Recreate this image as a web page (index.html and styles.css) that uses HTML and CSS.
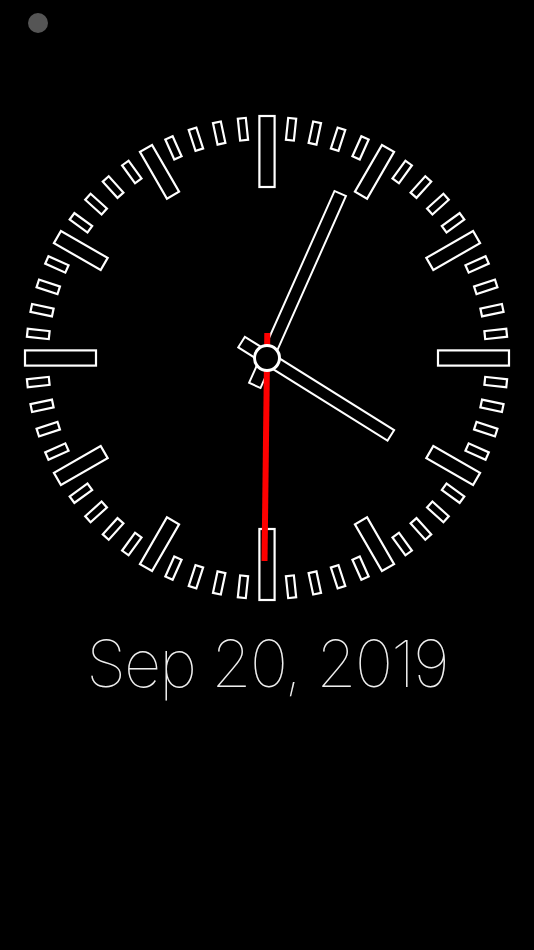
FILE: index.html
```html
<!DOCTYPE html>
<html lang="en">
<head>
<meta charset="utf-8">
<title>Clock</title>
<link rel="stylesheet" href="styles.css">
</head>
<body>
<div class="screen">
  <div class="status"><span class="dot"></span></div>
  <svg class="clock" viewBox="-267 -250 534 500" width="534" height="500" aria-label="Analog clock">
    <defs>
      <rect id="mn" class="tick" x="-4" y="-241" width="8" height="22"/>
      <rect id="hr" class="tick" x="-7" y="-242" width="14" height="54"/>
      <rect id="qt" class="tick" x="-7.6" y="-242" width="15.2" height="71"/>
    </defs>
    <g class="ticks">
      <use href="#qt" transform="rotate(0)"/>
      <use href="#mn" transform="rotate(6)"/>
      <use href="#mn" transform="rotate(12)"/>
      <use href="#mn" transform="rotate(18)"/>
      <use href="#mn" transform="rotate(24)"/>
      <use href="#hr" transform="rotate(30)"/>
      <use href="#mn" transform="rotate(36)"/>
      <use href="#mn" transform="rotate(42)"/>
      <use href="#mn" transform="rotate(48)"/>
      <use href="#mn" transform="rotate(54)"/>
      <use href="#hr" transform="rotate(60)"/>
      <use href="#mn" transform="rotate(66)"/>
      <use href="#mn" transform="rotate(72)"/>
      <use href="#mn" transform="rotate(78)"/>
      <use href="#mn" transform="rotate(84)"/>
      <use href="#qt" transform="rotate(90)"/>
      <use href="#mn" transform="rotate(96)"/>
      <use href="#mn" transform="rotate(102)"/>
      <use href="#mn" transform="rotate(108)"/>
      <use href="#mn" transform="rotate(114)"/>
      <use href="#hr" transform="rotate(120)"/>
      <use href="#mn" transform="rotate(126)"/>
      <use href="#mn" transform="rotate(132)"/>
      <use href="#mn" transform="rotate(138)"/>
      <use href="#mn" transform="rotate(144)"/>
      <use href="#hr" transform="rotate(150)"/>
      <use href="#mn" transform="rotate(156)"/>
      <use href="#mn" transform="rotate(162)"/>
      <use href="#mn" transform="rotate(168)"/>
      <use href="#mn" transform="rotate(174)"/>
      <use href="#qt" transform="rotate(180)"/>
      <use href="#mn" transform="rotate(186)"/>
      <use href="#mn" transform="rotate(192)"/>
      <use href="#mn" transform="rotate(198)"/>
      <use href="#mn" transform="rotate(204)"/>
      <use href="#hr" transform="rotate(210)"/>
      <use href="#mn" transform="rotate(216)"/>
      <use href="#mn" transform="rotate(222)"/>
      <use href="#mn" transform="rotate(228)"/>
      <use href="#mn" transform="rotate(234)"/>
      <use href="#hr" transform="rotate(240)"/>
      <use href="#mn" transform="rotate(246)"/>
      <use href="#mn" transform="rotate(252)"/>
      <use href="#mn" transform="rotate(258)"/>
      <use href="#mn" transform="rotate(264)"/>
      <use href="#qt" transform="rotate(270)"/>
      <use href="#mn" transform="rotate(276)"/>
      <use href="#mn" transform="rotate(282)"/>
      <use href="#mn" transform="rotate(288)"/>
      <use href="#mn" transform="rotate(294)"/>
      <use href="#hr" transform="rotate(300)"/>
      <use href="#mn" transform="rotate(306)"/>
      <use href="#mn" transform="rotate(312)"/>
      <use href="#mn" transform="rotate(318)"/>
      <use href="#mn" transform="rotate(324)"/>
      <use href="#hr" transform="rotate(330)"/>
      <use href="#mn" transform="rotate(336)"/>
      <use href="#mn" transform="rotate(342)"/>
      <use href="#mn" transform="rotate(348)"/>
      <use href="#mn" transform="rotate(354)"/>
    </g>
    <rect class="hand" x="-6.25" y="-146" width="12.5" height="176" transform="rotate(122)"/>
    <rect class="hand" x="-6.25" y="-180" width="12.5" height="210" transform="rotate(24)"/>
    <rect class="second" x="-3" y="-203" width="6" height="228" transform="rotate(180.7)"/>
    <circle class="pivot" cx="0" cy="0" r="12.5"/>
  </svg>
  <div class="date">Sep 20, 2019</div>
</div>
</body>
</html>
```

FILE: styles.css
```css
html, body {
  margin: 0;
  padding: 0;
  background: #000;
}

.screen {
  width: 534px;
  height: 950px;
  display: flex;
  flex-direction: column;
  align-items: stretch;
  background: #000;
  overflow: hidden;
}

.status {
  padding: 13px 0 0 28px;
  height: 20px;
}

.dot {
  display: block;
  width: 20px;
  height: 20px;
  border-radius: 50%;
  background: #555;
}

.clock {
  display: block;
  margin-top: 75px;
  width: 534px;
  height: 500px;
}

.tick {
  fill: none;
  stroke: #fff;
  stroke-width: 2.2;
}

.hand {
  fill: #000;
  stroke: #fff;
  stroke-width: 2;
}

.second {
  fill: #ff0000;
}

.pivot {
  fill: #000;
  stroke: #fff;
  stroke-width: 3;
}

.date {
  margin-top: 16px;
  text-align: center;
  font-family: "Inter", "Lato", "Liberation Sans", sans-serif;
  font-weight: 100;
  font-size: 65px;
  line-height: 80px;
  letter-spacing: -2px;
  color: #eee;
}
```
